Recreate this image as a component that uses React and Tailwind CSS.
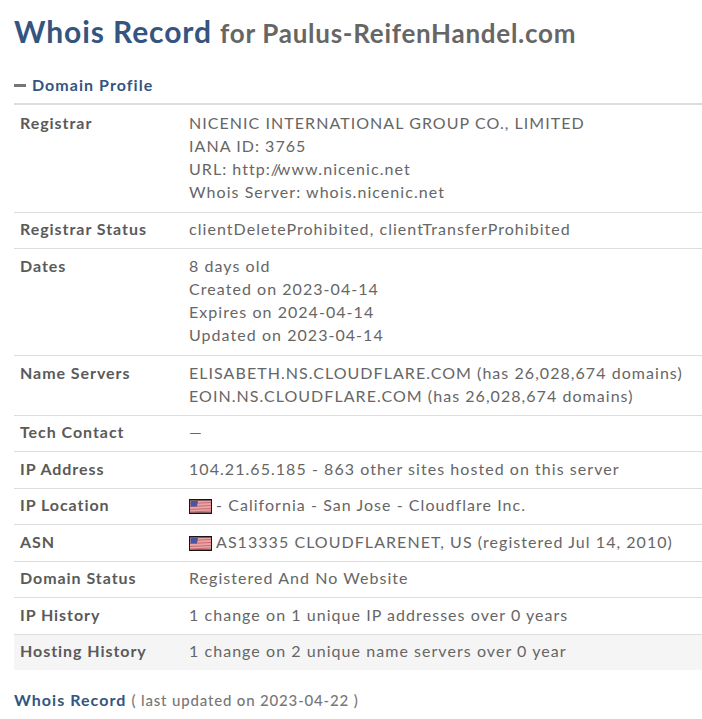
const rows = [
  { label: "Registrar", lines: ["NICENIC INTERNATIONAL GROUP CO., LIMITED", "IANA ID: 3765", "URL", "Whois Server: whois.nicenic.net"], pad: "pt-[5.5px] pb-[9px]" },
  { label: "Registrar Status", lines: ["clientDeleteProhibited, clientTransferProhibited"] },
  { label: "Dates", lines: ["8 days old", "Created on 2023-04-14", "Expires on 2024-04-14", "Updated on 2023-04-14"], pad: "pt-[5px] pb-[9px]" },
  { label: "Name Servers", lines: ["ELISABETH.NS.CLOUDFLARE.COM (has 26,028,674 domains)", "EOIN.NS.CLOUDFLARE.COM (has 26,028,674 domains)"] },
  { label: "Tech Contact", lines: ["—"] },
  { label: "IP Address", lines: ["104.21.65.185 - 863 other sites hosted on this server"] },
  { label: "IP Location", flag: true, lines: ["- California - San Jose - Cloudflare Inc."] },
  { label: "ASN", flag: true, lines: ["AS13335 CLOUDFLARENET, US (registered Jul 14, 2010)"] },
  { label: "Domain Status", lines: ["Registered And No Website"] },
  { label: "IP History", lines: ["1 change on 1 unique IP addresses over 0 years"] },
  { label: "Hosting History", lines: ["1 change on 2 unique name servers over 0 year"], shaded: true },
];

function Flag() {
  return (
    <svg width="23" height="15" viewBox="0 0 23 15" className="mr-[4px] inline-block align-[-3px]">
      <rect width="23" height="15" fill="#1a1416" />
      <g className="blur-[0.5px]">
        <rect x="1" y="1.5" width="21" height="12" fill="#e8a5a6" />
        <path d="M1 4.5l21-1M1 7.5l21-1M1 10.5l21-1M1 13l21-1" stroke="#c96a70" strokeWidth="1.2" />
        <path d="M1.5 2h7.5l-1 5.5h-6.5z" fill="#4a55a0" />
      </g>
    </svg>
  );
}

export default function App() {
  return (
    <div className="min-h-screen bg-white pl-[14px] font-['Lato','Liberation_Sans',sans-serif] tracking-[1.05px] text-[#666]">
      <h1 className="pt-[11px] text-[30px] leading-[40px] font-bold tracking-[0.9px] text-[#666]">
        <span className="text-[#335580]">Whois Record</span>{" "}
        <span className="text-[26px] tracking-[0.72px]">for Paulus-ReifenHandel.com</span>
      </h1>

      <div className="mt-[16px] mb-[2px] flex h-[32px] items-center text-[16px] font-bold text-[#335580]">
        <span className="mr-[6px] h-[3px] w-[12px] bg-[#777]" />
        Domain Profile
      </div>

      <div className="border-t-2 border-[#ddd]">
        {rows.map((r, i) => (
          <div
            key={r.label}
            className={`flex px-[6px] text-[16px] leading-[23px] ${r.pad || "pt-[4.5px] pb-[8px]"} ${i > 0 ? "border-t border-[#ddd]" : ""} ${r.shaded ? "bg-[#f5f5f5]" : ""}`}
          >
            <div className="w-[169px] shrink-0 font-bold tracking-[0.95px] text-[#5a5a5a]">{r.label}</div>
            <div className="whitespace-nowrap">
              {r.lines.map((l) => (
                <div key={l}>
                  {r.flag && <Flag />}
                  {l === "URL" ? (
                    <>
                      URL: http:<span className="tracking-[-4.5px]">/</span>
                      <span className="tracking-[-3px]">/</span>www.nicenic.net
                    </>
                  ) : (
                    l
                  )}
                </div>
              ))}
            </div>
          </div>
        ))}
      </div>

      <div className="mt-[18px] text-[16px] leading-[23px]">
        <span className="font-bold text-[#335580]">Whois Record</span>{" "}
        <span className="text-[15px] font-medium tracking-[0.83px] text-[#777]">( last updated on 2023-04-22 )</span>
      </div>
    </div>
  );
}
